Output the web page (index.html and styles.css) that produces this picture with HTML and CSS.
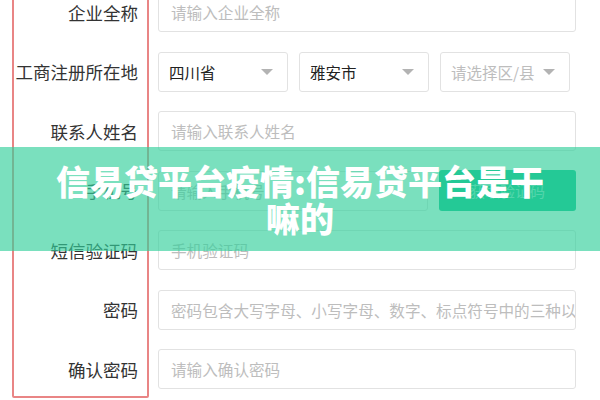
FILE: index.html
```html
<!DOCTYPE html>
<html lang="zh-CN">
<head>
    <meta charset="UTF-8">
    <meta name="viewport" content="width=device-width, initial-scale=1.0">
    <title>信易贷平台疫情</title>
    <link rel="stylesheet" href="styles.css">
</head>
<body>
    <div class="page">
        <form class="reg-form">
            <div class="form-row">
                <label class="form-label">企业全称</label>
                <div class="field"><span class="placeholder">请输入企业全称</span></div>
            </div>
            <div class="form-row">
                <label class="form-label">工商注册所在地</label>
                <div class="select-group">
                    <div class="select"><span>四川省</span><i class="caret"></i></div>
                    <div class="select"><span>雅安市</span><i class="caret"></i></div>
                    <div class="select"><span class="placeholder">请选择区/县</span><i class="caret"></i></div>
                </div>
            </div>
            <div class="form-row">
                <label class="form-label">联系人姓名</label>
                <div class="field"><span class="placeholder">请输入联系人姓名</span></div>
            </div>
            <div class="form-row">
                <label class="form-label">手机号</label>
                <div class="field-with-btn">
                    <div class="field"><span class="placeholder">请输入手机号</span></div>
                    <button type="button" class="code-btn">获取验证码</button>
                </div>
            </div>
            <div class="form-row">
                <label class="form-label">短信验证码</label>
                <div class="field"><span class="placeholder">手机验证码</span></div>
            </div>
            <div class="form-row">
                <label class="form-label">密码</label>
                <div class="field"><span class="placeholder">密码包含大写字母、小写字母、数字、标点符号中的三种以上</span></div>
            </div>
            <div class="form-row">
                <label class="form-label">确认密码</label>
                <div class="field"><span class="placeholder">请输入确认密码</span></div>
            </div>
        </form>

        <!-- annotation box round the labels -->
        <div class="label-mark"></div>

        <div class="title-banner">
            <h1>信易贷平台疫情:信易贷平台是干嘛的</h1>
        </div>
    </div>
</body>
</html>
```

FILE: styles.css
```css
html, body {
    margin: 0;
    height: 100%;
    overflow: hidden;
    background: #ffffff;
}

body {
    font-family: "Noto Sans CJK SC", "Noto Sans", sans-serif;
    color: #333;
}

.page {
    position: relative;
    width: 600px;
    height: 400px;
    overflow: hidden;
}

.reg-form {
    margin: -8px 24px 0 0;
    display: flex;
    flex-direction: column;
    gap: 19.5px;
}

.form-row {
    display: grid;
    grid-template-columns: 138px 1fr;
    column-gap: 20px;
    align-items: center;
    height: 40px;
}

.form-label {
    text-align: right;
    font-size: 17.5px;
    color: #333;
    white-space: nowrap;
}

.field {
    box-sizing: border-box;
    height: 40px;
    border: 1px solid #e2e2e2;
    border-radius: 3px;
    padding-left: 12px;
    display: flex;
    align-items: center;
    overflow: hidden;
    white-space: nowrap;
    font-size: 15.6px;
}

.placeholder {
    color: #bdbdbd;
}

.select-group {
    display: grid;
    grid-template-columns: repeat(3, 130px);
    column-gap: 11px;
}

.select {
    box-sizing: border-box;
    height: 40px;
    border: 1px solid #e2e2e2;
    border-radius: 3px;
    padding: 0 14px 0 10px;
    display: flex;
    align-items: center;
    justify-content: space-between;
    font-size: 15.5px;
    color: #222;
}

.caret {
    width: 0;
    height: 0;
    border-left: 6px solid transparent;
    border-right: 6px solid transparent;
    border-top: 6px solid #b3b3b3;
}

.field-with-btn {
    display: grid;
    grid-template-columns: 1fr 137px;
    column-gap: 11px;
}

.code-btn {
    height: 41px;
    margin-top: -1px;
    border: none;
    border-radius: 3px;
    background-color: #0bbd8c;
    color: rgba(255, 255, 255, 0.55);
    font-family: inherit;
    font-size: 15px;
}

.label-mark {
    position: absolute;
    left: 12px;
    top: -10px;
    width: 133px;
    height: 404px;
    border: 2px solid #e98585;
    border-radius: 2px;
}

.title-banner {
    position: absolute;
    left: 0;
    right: 0;
    top: 147px;
    height: 104px;
    background-color: rgba(51, 207, 155, 0.65);
    display: flex;
    align-items: center;
    justify-content: center;
}

.title-banner h1 {
    margin: 0;
    width: 500px;
    text-align: center;
    color: #ffffff;
    font-size: 34px;
    font-weight: 900;
    line-height: 37px;
}
```
